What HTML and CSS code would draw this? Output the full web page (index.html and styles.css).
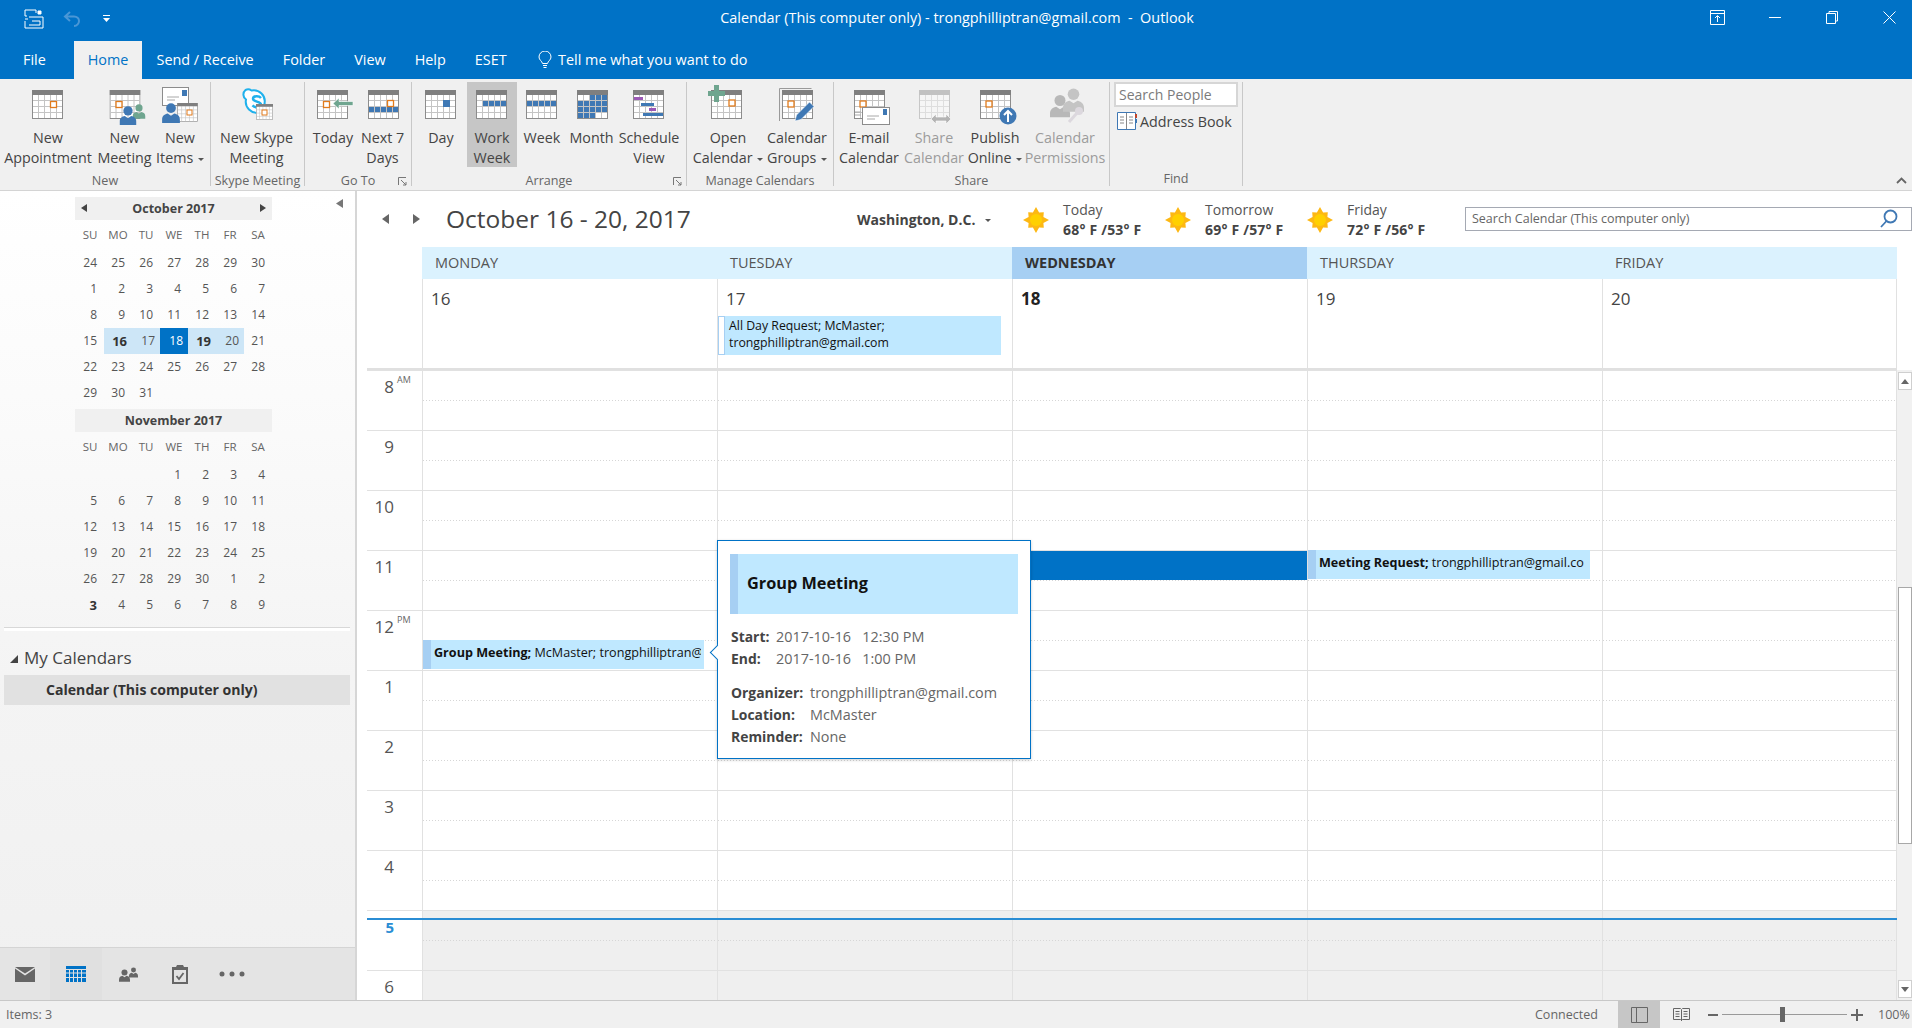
FILE: index.html
```html
<!DOCTYPE html>
<html lang="en">
<head>
<meta charset="utf-8">
<title>Calendar - Outlook</title>
<link rel="stylesheet" href="styles.css">
</head>
<body>
<svg class="defs" aria-hidden="true">
  <defs>
    <symbol id="cal" viewBox="0 0 31 29">
      <rect x=".5" y=".5" width="30" height="28" fill="#fff" stroke="#8c8c8c"/>
      <path d="M6.5 5v23M12.5 5v23M18.5 5v23M24.5 5v23M1 10.5h29M1 16.5h29M1 22.5h29" stroke="#c4c4c4" fill="none"/>
      <rect width="31" height="5" fill="#7f7f7f"/>
    </symbol>
    <symbol id="per" viewBox="0 0 16 18">
      <circle cx="8" cy="4.6" r="4.4"/>
      <path d="M0 18v-3c0-3.500 2.500-5 5-5.500l3 2 3-2c2.500.5 5 2 5 5.500v3z"/>
    </symbol>
    <symbol id="sun" viewBox="0 0 26 26">
      <path fill="#fdb813" d="M13 0l3.100 5.600 4.700-.4-.4 4.700L26 13l-5.600 3.100.4 4.700-4.700-.4L13 26l-3.100-5.600-4.700.4.400-4.700L0 13l5.600-3.100-.4-4.700 4.700.4z"/>
      <circle cx="13" cy="13" r="6" fill="#ffd000"/>
    </symbol>
  </defs>
</svg>

<div class="app">
  <header class="titlebar">
    <div class="qat">
      <svg class="qat-save" width="20" height="20" viewBox="0 0 20 20" fill="none" stroke="#fff"><path d="M1 7V1h11v3M1 7h2M1 10h3M1 12v7h18V8H5M8 12h8v4H5"/><path d="M14 2h3v3h-3z" fill="#fff"/></svg>
      <svg class="qat-undo" width="18" height="16" viewBox="0 0 18 16" fill="none" stroke="#4a97d6" stroke-width="2"><path d="M7 1L2 5.500 7 10M2 5.500h9c3 0 5 2 5 4.500s-2 5-5 5"/></svg>
      <svg class="qat-more" width="7" height="8" viewBox="0 0 7 8"><path fill="#fff" d="M0 0h7v1H0zM0 3h7L3.500 7z"/></svg>
    </div>
    <div class="title">Calendar (This computer only) - trongphilliptran@gmail.com &nbsp;-&nbsp; Outlook</div>
    <div class="winbtns">
      <svg width="15" height="15" viewBox="0 0 15 15" fill="none" stroke="#fff"><path d="M.5.500h14v14H.5zM.5 3.500h14M7.500 12V6M5 8l2.500-2.500L10 8"/></svg>
      <svg width="12" height="15" viewBox="0 0 12 15" fill="none" stroke="#fff"><path d="M0 7.500h12"/></svg>
      <svg width="12" height="15" viewBox="0 0 12 15" fill="none" stroke="#fff"><path d="M.5 3.500h9v10h-9zM3 3V1.500h8.500V11H10"/></svg>
      <svg width="13" height="15" viewBox="0 0 13 15" fill="none" stroke="#fff"><path d="M.5 1.500l12 12M12.500 1.500l-12 12"/></svg>
    </div>
  </header>

  <nav class="tabs">
    <span class="tab t-file">File</span>
    <span class="tab t-home">Home</span>
    <span class="tab">Send / Receive</span>
    <span class="tab">Folder</span>
    <span class="tab">View</span>
    <span class="tab">Help</span>
    <span class="tab">ESET</span>
    <span class="tab t-tell">
      <svg width="14" height="18" viewBox="0 0 14 18" fill="none" stroke="#fff"><path d="M4.500 12.500C4 10 1 9 1 6a6 6 0 0 1 12 0c0 3-3 4-3.500 6.500zM5 14.500h4M5.500 16.500h3"/></svg>
      Tell me what you want to do
    </span>
  </nav>

  <section class="ribbon">
    <div class="grp g-new">
      <div class="btns">
        <div class="rb w-appt"><svg class="ic" viewBox="0 0 44 42"><use href="#cal" x="6" y="6" width="31" height="29"/><rect x="24.500" y="17.500" width="6" height="6" fill="#fff" stroke="#e17b1c" stroke-width="1.300"/></svg><span>New<br>Appointment</span></div>
        <div class="rb w-meet"><svg class="ic" viewBox="0 0 44 42"><use href="#cal" x="6.500" y="6" width="31" height="29"/><rect x="13" y="17.500" width="6" height="6" fill="#fff" stroke="#e17b1c" stroke-width="1.300"/><use href="#per" x="29.500" y="18" width="13" height="19" fill="#6fa58f"/><use href="#per" x="16.500" y="22" width="17" height="19" fill="#3f78b4"/></svg><span>New<br>Meeting</span></div>
        <div class="rb w-items"><svg class="ic" viewBox="0 0 44 42"><rect x="4.500" y="3.500" width="26" height="18" fill="#fff" stroke="#8c8c8c"/><rect x="24" y="6" width="5" height="6" fill="#3f78b4"/><path d="M9 13h12M9 16h8" stroke="#a8a8a8"/><use href="#cal" x="19" y="19" width="21" height="19"/><rect x="29" y="26" width="5" height="5" fill="#fff" stroke="#e17b1c"/><use href="#per" x="4" y="19" width="18" height="20" fill="#3f78b4"/></svg><span>New<br>Items <i class="dd"></i></span></div>
      </div>
      <div class="glabel">New</div>
    </div>
    <div class="grp g-skype">
      <div class="btns">
        <div class="rb w-skype"><svg class="ic" viewBox="0 0 44 42"><path d="M12 7a6 6 0 0 1 6 .5 11 11 0 0 1 13 13 6 6 0 0 1 .5 6 6 6 0 0 1-6 3 11 11 0 0 1-13-13 6 6 0 0 1-.5-9.500z" transform="translate(-1.500 -1)" fill="#fff" stroke="#1fb1ec" stroke-width="2"/><path d="M26 14c-2-2.500-8-2.500-8 .8 0 3.500 8 2.200 8 5.800 0 3.500-6 3.500-8.500.8" fill="none" stroke="#1fb1ec" stroke-width="2.500"/><use href="#cal" x="21" y="20" width="17" height="16"/><rect x="27" y="26" width="5" height="5" fill="#fff" stroke="#e17b1c"/></svg><span>New Skype<br>Meeting</span></div>
      </div>
      <div class="glabel">Skype Meeting</div>
    </div>
    <div class="grp g-goto">
      <div class="btns">
        <div class="rb w-today"><svg class="ic" viewBox="0 0 44 42"><use href="#cal" x="6" y="6" width="31" height="29"/><rect x="12.500" y="17.500" width="6" height="6" fill="#fff" stroke="#e17b1c" stroke-width="1.300"/><path d="M22 19.500l6-5.500v3.500h14v4H28V25z" fill="#6fa58f" stroke="#fff" stroke-width=".6"/></svg><span>Today</span></div>
        <div class="rb w-next"><svg class="ic" viewBox="0 0 44 42"><use href="#cal" x="7" y="6" width="31" height="29"/><path d="M8 23h5v5H8zM14 23h5v5h-5zM20 23h5v5h-5zM26 23h5v5h-5zM32 23h5v5h-5z" fill="#3f78b4"/><rect x="26.500" y="16.500" width="6" height="6" fill="#fff" stroke="#e17b1c" stroke-width="1.300"/></svg><span>Next 7<br>Days</span></div>
      </div>
      <div class="glabel">Go To<svg class="launch" width="9" height="9" viewBox="0 0 9 9" fill="none" stroke="#777"><path d="M.5 8V.5H8M3 3l5 5M8 5v3H5"/></svg></div>
    </div>
    <div class="grp g-arr">
      <div class="btns">
        <div class="rb w-day"><svg class="ic" viewBox="0 0 44 42"><use href="#cal" x="6" y="6" width="31" height="29"/><rect x="24" y="16" width="7" height="7" fill="#3f78b4"/></svg><span>Day</span></div>
        <div class="rb w-ww on"><svg class="ic" viewBox="0 0 44 42"><use href="#cal" x="6" y="6" width="31" height="29"/><path d="M13 17h5v5h-5zM19 17h5v5h-5zM25 17h5v5h-5zM31 17h5v5h-5z" fill="#3f78b4"/></svg><span>Work<br>Week</span></div>
        <div class="rb w-week"><svg class="ic" viewBox="0 0 44 42"><use href="#cal" x="6" y="6" width="31" height="29"/><path d="M7 17h5v5H7zM13 17h5v5h-5zM19 17h5v5h-5zM25 17h5v5h-5zM31 17h5v5h-5z" fill="#3f78b4"/></svg><span>Week</span></div>
        <div class="rb w-month"><svg class="ic" viewBox="0 0 44 42"><use href="#cal" x="7" y="6" width="31" height="29"/><path d="M20 11h5v5h-5zM26 11h5v5h-5zM32 11h5v5h-5zM8 17h5v5H8zM14 17h5v5h-5zM20 17h5v5h-5zM26 17h5v5h-5zM32 17h5v5h-5zM8 23h5v5H8zM14 23h5v5h-5zM20 23h5v5h-5zM26 23h5v5h-5zM32 23h5v5h-5zM8 29h5v5H8zM14 29h5v5h-5zM20 29h5v5h-5z" fill="#3f78b4"/></svg><span>Month</span></div>
        <div class="rb w-sched"><svg class="ic" viewBox="0 0 44 42"><use href="#cal" x="6" y="6" width="31" height="29"/><path d="M7 13h9v3H7z" fill="#9b59b6"/><path d="M14 19h13v3H14z" fill="#3f78b4"/><path d="M22 24h7v3h-7z" fill="#9b59b6"/><path d="M16 29h20v3H16z" fill="#3f78b4"/></svg><span>Schedule<br>View</span></div>
      </div>
      <div class="glabel">Arrange<svg class="launch" width="9" height="9" viewBox="0 0 9 9" fill="none" stroke="#777"><path d="M.5 8V.5H8M3 3l5 5M8 5v3H5"/></svg></div>
    </div>
    <div class="grp g-man">
      <div class="btns">
        <div class="rb w-open"><svg class="ic" viewBox="0 0 44 42"><use href="#cal" x="5" y="6" width="31" height="29"/><rect x="23" y="16" width="6" height="6" fill="#fff" stroke="#e17b1c" stroke-width="1.300"/><path d="M8 1h5v6h6v5h-6v6H8v-6H2V7h6z" fill="#6fa58f"/></svg><span>Open<br>Calendar <i class="dd"></i></span></div>
        <div class="rb w-grp"><svg class="ic" viewBox="0 0 44 42"><path d="M4.500 37V4.500h32" fill="none" stroke="#9a9a9a"/><use href="#cal" x="7" y="6" width="31" height="29"/><rect x="13" y="17" width="6" height="6" fill="#fff" stroke="#e17b1c" stroke-width="1.300"/><path d="M20 37l1.500-6 13-13 4.500 4.500-13 13z" fill="#3f78b4" stroke="#fff" stroke-width=".6"/></svg><span>Calendar<br>Groups <i class="dd"></i></span></div>
      </div>
      <div class="glabel">Manage Calendars</div>
    </div>
    <div class="grp g-share">
      <div class="btns">
        <div class="rb w-mail"><svg class="ic" viewBox="0 0 44 42"><use href="#cal" x="7" y="6" width="31" height="29"/><rect x="13" y="17" width="6" height="6" fill="#fff" stroke="#e17b1c" stroke-width="1.300"/><rect x="15.500" y="23.500" width="27" height="17" fill="#fff" stroke="#8c8c8c"/><rect x="36" y="25" width="4" height="6" fill="#3f78b4"/><path d="M20 32h12M20 35h8M8 28h6M8 31h6" stroke="#a8a8a8"/></svg><span>E-mail<br>Calendar</span></div>
        <div class="rb w-shc off"><svg class="ic" viewBox="0 0 44 42"><g opacity=".4"><use href="#cal" x="7" y="6" width="31" height="29"/></g><path d="M19 35l5-5v3h10v-3l5 5-5 5v-3H24v3z" fill="#b4b4b4" stroke="#fff" stroke-width=".6"/></svg><span>Share<br>Calendar</span></div>
        <div class="rb w-pub"><svg class="ic" viewBox="0 0 44 42"><use href="#cal" x="7" y="6" width="31" height="29"/><rect x="13" y="17" width="6" height="6" fill="#fff" stroke="#e17b1c" stroke-width="1.300"/><circle cx="35" cy="32" r="8.500" fill="#3f78b4"/><path d="M35 38v-11M31 31l4-4 4 4" fill="none" stroke="#fff" stroke-width="2"/></svg><span>Publish<br>Online <i class="dd"></i></span></div>
        <div class="rb w-perm off"><svg class="ic" viewBox="0 0 44 42"><use href="#per" x="7" y="9" width="20" height="26" fill="#b8b8b8"/><use href="#per" x="20" y="3" width="21" height="26" fill="#c4c4c4"/><path d="M26 38l8-9" stroke="#dcd8de" stroke-width="3"/><circle cx="36" cy="27" r="4" fill="#dcd8de"/></svg><span>Calendar<br>Permissions</span></div>
      </div>
      <div class="glabel">Share</div>
    </div>
    <div class="grp g-find">
      <div class="findbox">Search People</div>
      <div class="addr">
        <svg width="20" height="18" viewBox="0 0 20 18"><path d="M.5.500h18v17H.5z" fill="#fff" stroke="#3f78b4"/><path d="M9.500 1v16M3 5h4M3 8h4M3 11h4M12 5h4M12 8h4M12 11h4" stroke="#888"/><path d="M18 2h2v4h-2z" fill="#c0452a"/><path d="M18 7h2v4h-2z" fill="#3f78b4"/></svg>
        Address Book
      </div>
      <div class="glabel find-label">Find</div>
    </div>
    <svg class="collapse" width="11" height="7" viewBox="0 0 11 7" fill="none" stroke="#666" stroke-width="1.800"><path d="M1 6l4.500-4.500L10 6"/></svg>
  </section>

  <div class="body">
    <aside class="side">
      <div class="side-top">
        <svg class="side-col" width="8" height="9" viewBox="0 0 8 9"><path d="M7 0v9L0 4.500z" fill="#777"/></svg>
        <div class="mini">
          <div class="mhd"><i class="ml"></i><b>October 2017</b><i class="mr"></i></div>
          <div class="mc dow"><span>SU</span><span>MO</span><span>TU</span><span>WE</span><span>TH</span><span>FR</span><span>SA</span></div>
          <div class="mc">
            <span>24</span><span>25</span><span>26</span><span>27</span><span>28</span><span>29</span><span>30</span>
            <span>1</span><span>2</span><span>3</span><span>4</span><span>5</span><span>6</span><span>7</span>
            <span>8</span><span>9</span><span>10</span><span>11</span><span>12</span><span>13</span><span>14</span>
            <span>15</span><span class="sel bd">16</span><span class="sel">17</span><span class="cur">18</span><span class="sel bd">19</span><span class="sel">20</span><span>21</span>
            <span>22</span><span>23</span><span>24</span><span>25</span><span>26</span><span>27</span><span>28</span>
            <span>29</span><span>30</span><span>31</span><span></span><span></span><span></span><span></span>
          </div>
          <div class="mhd nov"><b>November 2017</b></div>
          <div class="mc dow"><span>SU</span><span>MO</span><span>TU</span><span>WE</span><span>TH</span><span>FR</span><span>SA</span></div>
          <div class="mc">
            <span></span><span></span><span></span><span>1</span><span>2</span><span>3</span><span>4</span>
            <span>5</span><span>6</span><span>7</span><span>8</span><span>9</span><span>10</span><span>11</span>
            <span>12</span><span>13</span><span>14</span><span>15</span><span>16</span><span>17</span><span>18</span>
            <span>19</span><span>20</span><span>21</span><span>22</span><span>23</span><span>24</span><span>25</span>
            <span>26</span><span>27</span><span>28</span><span>29</span><span>30</span><span>1</span><span>2</span>
            <span class="bd plain">3</span><span>4</span><span>5</span><span>6</span><span>7</span><span>8</span><span>9</span>
          </div>
        </div>
        <div class="side-rule"></div>
        <div class="mycal"><i class="tri"></i>My Calendars</div>
        <div class="calrow">Calendar (This computer only)</div>
      </div>
      <div class="navbar">
        <div class="nv nv-1"><svg width="20" height="15" viewBox="0 0 20 15"><path d="M0 1.500l10 7 10-7V15H0z" fill="#666"/><path d="M0 0h20l-10 6.500z" fill="#666"/></svg></div>
        <div class="nv nv-on"><svg width="20" height="16" viewBox="0 0 20 16" fill="#0072c6"><path d="M0 0h20v3H0zM0 4h3v2.500H0zM4 4h3v2.500H4zM8 4h3v2.500H8zM12 4h3v2.500h-3zM16 4h4v2.500h-4zM0 7.500h3v3.500H0zM4 7.500h3v3.500H4zM8 7.500h3v3.500H8zM12 7.500h3v3.500h-3zM16 7.500h4v3.500h-4zM0 12h3v4H0zM4 12h3v4H4zM8 12h3v4H8zM12 12h3v4h-3zM16 12h4v4h-4z"/></svg></div>
        <div class="nv"><svg width="19" height="16" viewBox="0 0 19 16"><use href="#per" x="0" y="3" width="11" height="13" fill="#666"/><use href="#per" x="10" y="0" width="9" height="13" fill="#666"/></svg></div>
        <div class="nv"><svg width="16" height="19" viewBox="0 0 16 19"><path d="M0 2h4l1-2h6l1 2h4v17H0z" fill="#666"/><path d="M2 5h12v12H2z" fill="#e3e3e3"/><path d="M4.500 11l2.500 3 4.500-6" stroke="#666" stroke-width="1.800" fill="none"/></svg></div>
        <div class="nv"><svg width="26" height="6" viewBox="0 0 26 6" fill="#666"><circle cx="3" cy="3" r="2.500"/><circle cx="13" cy="3" r="2.500"/><circle cx="23" cy="3" r="2.500"/></svg></div>
      </div>
    </aside>

    <main class="main">
      <div class="mhead">
        <div class="arrows"><i class="al"></i><i class="ar"></i></div>
        <h1 class="range">October 16 - 20, 2017</h1>
        <div class="loc">Washington, D.C. <i class="dd"></i></div>
        <div class="wx"><svg width="26" height="26"><use href="#sun" width="26" height="26"/></svg><div><div>Today</div><b>68° F /53° F</b></div></div>
        <div class="wx"><svg width="26" height="26"><use href="#sun" width="26" height="26"/></svg><div><div>Tomorrow</div><b>69° F /57° F</b></div></div>
        <div class="wx wx-last"><svg width="26" height="26"><use href="#sun" width="26" height="26"/></svg><div><div>Friday</div><b>72° F /56° F</b></div></div>
        <div class="search"><span>Search Calendar (This computer only)</span><svg width="18" height="20" viewBox="0 0 18 20" fill="none" stroke="#3f78b4" stroke-width="1.800"><circle cx="10.500" cy="7.500" r="6"/><path d="M6.500 12L1 18"/></svg></div>
      </div>

      <div class="dayhdr">
        <div>MONDAY</div><div>TUESDAY</div><div class="today">WEDNESDAY</div><div>THURSDAY</div><div>FRIDAY</div>
      </div>

      <div class="allday">
        <div class="gut"></div>
        <div class="ad">16</div>
        <div class="ad">17
          <div class="adev"><i></i><span>All Day Request; McMaster;<br>trongphilliptran@gmail.com</span></div>
        </div>
        <div class="ad bd">18</div>
        <div class="ad">19</div>
        <div class="ad">20</div>
      </div>

      <div class="timewrap">
        <div class="times">
          <div class="gut hr"><span class="hn">8</span><span class="ap">AM</span></div><div class="c"></div><div class="c"></div><div class="c"></div><div class="c"></div><div class="c"></div>
          <div class="gut hr"><span class="hn">9</span></div><div class="c"></div><div class="c"></div><div class="c"></div><div class="c"></div><div class="c"></div>
          <div class="gut hr"><span class="hn">10</span></div><div class="c"></div><div class="c"></div><div class="c"></div><div class="c"></div><div class="c"></div>
          <div class="gut hr"><span class="hn">11</span></div><div class="c"></div><div class="c"></div><div class="c"><div class="busy"></div></div><div class="c"><div class="ev ev-req"><span><b>Meeting Request;</b> trongphilliptran@gmail.com</span></div></div><div class="c"></div>
          <div class="gut hr"><span class="hn">12</span><span class="ap">PM</span></div><div class="c"><div class="ev ev-grp"><span><b>Group Meeting;</b> McMaster; trongphilliptran@</span></div></div><div class="c"></div><div class="c"></div><div class="c"></div><div class="c"></div>
          <div class="gut hr"><span class="hn">1</span></div><div class="c"></div><div class="c"></div><div class="c"></div><div class="c"></div><div class="c"></div>
          <div class="gut hr"><span class="hn">2</span></div><div class="c"></div><div class="c"></div><div class="c"></div><div class="c"></div><div class="c"></div>
          <div class="gut hr"><span class="hn">3</span></div><div class="c"></div><div class="c"></div><div class="c"></div><div class="c"></div><div class="c"></div>
          <div class="gut hr"><span class="hn">4</span></div><div class="c"></div><div class="c"></div><div class="c"></div><div class="c"></div><div class="c"></div>
          <div class="gut hr"><span class="hn now">5</span></div><div class="c off"></div><div class="c off"></div><div class="c off"></div><div class="c off"></div><div class="c off"></div>
          <div class="gut hr"><span class="hn">6</span></div><div class="c off"></div><div class="c off"></div><div class="c off"></div><div class="c off"></div><div class="c off"></div>
        </div>
        <div class="sb">
          <div class="sbb"><i class="up"></i></div>
          <div class="thumb"></div>
          <div class="sbb sbb-dn"><i class="dn"></i></div>
        </div>
        <div class="nowline"></div>
        <div class="pop">
          <i class="pop-arrow"></i>
          <div class="pop-head">Group Meeting</div>
          <dl class="info i-time">
            <dt>Start:</dt><dd>2017-10-16 &nbsp; 12:30 PM</dd>
            <dt>End:</dt><dd>2017-10-16 &nbsp; 1:00 PM</dd>
          </dl>
          <dl class="info i-more">
            <dt>Organizer:</dt><dd>trongphilliptran@gmail.com</dd>
            <dt>Location:</dt><dd>McMaster</dd>
            <dt>Reminder:</dt><dd>None</dd>
          </dl>
        </div>
      </div>
    </main>
  </div>

  <footer class="status">
    <span class="items">Items: 3</span>
    <span class="conn">Connected</span>
    <span class="vw vw-on"><svg width="17" height="16" viewBox="0 0 17 16" fill="none" stroke="#666"><path d="M.5.500h16v15H.5zM5.500 1v14"/></svg></span>
    <span class="vw"><svg width="17" height="15" viewBox="0 0 17 15" fill="none" stroke="#666"><path d="M.5 1.500h7l1 1 1-1h7v11h-7l-1 1-1-1h-7zM8.500 3v11M2.500 4.500h4M2.500 7h4M2.500 9.500h4M10.500 4.500h4M10.500 7h4M10.500 9.500h4"/></svg></span>
    <div class="zoom">
      <i class="z-minus"></i>
      <div class="z-track"><i></i></div>
      <i class="z-plus"></i>
    </div>
    <span class="pct">100%</span>
  </footer>
</div>
</body>
</html>
```
FILE: styles.css
```css
* { box-sizing: border-box; }
html, body { margin: 0; height: 100%; overflow: hidden; }
body { font-family: "Open Sans", "Liberation Sans", sans-serif; font-size: 13px; color: #444; background: #fff; }
i { font-style: normal; }
.defs { position: absolute; width: 0; height: 0; }
.app { display: flex; flex-direction: column; height: 1028px; width: 1912px; }

/* title bar */
.titlebar { height: 41px; background: #0072c6; color: #fff; display: flex; align-items: center; position: relative; flex: none; }
.qat { display: flex; align-items: center; padding-left: 24px; margin-top: -4px; }
.qat-undo { margin-left: 19px; }
.qat-more { margin-left: 22px; }
.title { position: absolute; left: 0; right: 0; top: 7px; text-align: center; font-size: 14.400px; line-height: 22px; padding-left: 2px; }
.winbtns { margin-left: auto; display: flex; align-items: center; margin-top: -7px; padding-right: 16px; }
.winbtns svg:nth-child(2) { margin-left: 44px; }
.winbtns svg:nth-child(3) { margin-left: 45px; }
.winbtns svg:nth-child(4) { margin-left: 45px; }

.tabs { height: 38px; background: #0072c6; color: #fff; display: flex; flex: none; font-size: 14.400px; line-height: 38px; padding-left: 9px; }
.tab { padding: 0 14.500px; }
.t-file { padding: 0 14px; width: 65px; }
.t-home { background: #f0f0f0; color: #0072c6; width: 68px; padding: 0; text-align: center; }
.t-tell { display: flex; align-items: center; gap: 6px; padding-left: 17px; }

/* ribbon */
.ribbon { height: 112px; background: #f0f0f0; border-bottom: 1px solid #d4d4d4; display: flex; padding-top: 3px; position: relative; flex: none; }
.grp { height: 104px; border-right: 1px solid #c8c8c8; display: flex; flex-direction: column; position: relative; flex: none; }
.g-new { width: 211px; }
.g-skype { width: 94px; }
.g-goto { width: 107px; }
.g-arr { width: 275px; }
.g-man { width: 147px; }
.g-share { width: 276px; }
.g-find { width: 133px; padding: 0 4px; }
.btns { display: flex; height: 86px; flex: none; }
.rb { display: flex; flex-direction: column; align-items: center; text-align: center; font-size: 14.300px; line-height: 20px; height: 85px; flex: none; white-space: nowrap; color: #444; }
.rb .ic { width: 44px; height: 42px; margin: 2px 0 2px; flex: none; overflow: visible; }
.rb.on { background: #c6c6c6; }
.rb.off { color: #9c9c9c; }
.w-appt { width: 96px; }
.w-meet { width: 57px; }
.w-items { width: 54px; }
.w-skype { width: 91px; }
.w-today { width: 56px; }
.w-next { width: 43px; }
.w-day { width: 52px; margin-left: 3px; }
.w-ww { width: 50px; }
.w-week { width: 50px; }
.w-month { width: 49px; }
.w-sched { width: 66px; }
.w-open { width: 78px; margin-left: 2px; }
.w-grp { width: 60px; }
.w-mail { width: 68px; margin-left: 1px; }
.w-shc { width: 62px; }
.w-pub { width: 60px; }
.w-perm { width: 80px; }
.dd { display: inline-block; width: 0; height: 0; border: 3px solid transparent; border-top: 3px solid #555; border-bottom: 0; vertical-align: middle; margin-left: 1px; }
.glabel { height: 18px; line-height: 26px; text-align: center; font-size: 12.600px; color: #666; white-space: nowrap; position: relative; }
.launch { position: absolute; right: 4px; top: 9px; }
.findbox { height: 25px; width: 124px; background: #fff; border: 2px solid #d6d6d6; padding-left: 3px; line-height: 22px; font-size: 14px; color: #7b7b7b; white-space: nowrap; overflow: hidden; }
.addr { display: flex; align-items: center; gap: 3px; margin: 4px 0 0 3px; height: 20px; font-size: 14.300px; white-space: nowrap; }
.find-label { margin-top: 35px; }
.collapse { position: absolute; right: 5px; top: 98px; }

/* main split */
.body { display: flex; height: 809px; flex: none; }
.side { width: 357px; border-right: 2px solid #d6d6d6; display: flex; flex-direction: column; flex: none; background: linear-gradient(#fff, #fbfbfb 25%, #f4f4f4 60%, #f0f0f0); }
.side-top { flex: 1; padding-top: 6px; position: relative; }
.side-col { position: absolute; left: 336px; top: 8px; }
.mini { width: 197px; margin-left: 75px; }
.mhd { height: 23px; background: #f0f0f0; display: flex; align-items: center; justify-content: center; position: relative; font-size: 12.500px; color: #444; }
.mhd.nov { margin-top: 3px; }
.ml, .mr { position: absolute; top: 7px; width: 0; height: 0; border: 4.500px solid transparent; }
.ml { left: 6px; border-left: 0; border-right: 6px solid #444; }
.mr { right: 6px; border-right: 0; border-left: 6px solid #444; }
.mc { display: grid; grid-template-columns: repeat(7, 28px); font-size: 12px; color: #555; margin-left: 1px; }
.mc span { height: 26px; line-height: 26px; text-align: right; padding-right: 7px; }
.mc.dow { height: 28px; margin-top: 2px; }
.mc.dow span { height: 26px; text-align: center; padding: 0; font-size: 11.500px; color: #666; }
.sel { background: #cde6f7; padding-right: 5px !important; }
.cur { background: #0072c6; color: #fff; padding-right: 5px !important; }
.mc .bd { font-weight: 700; color: #333; font-size: 13px; }
.side-rule { margin: 9px 5px 0 4px; height: 4px; border-top: 1px solid #d8d8d8; background: #fff; }
.mycal { margin-top: 13px; padding-left: 24px; height: 29px; line-height: 28px; font-size: 17px; color: #444; position: relative; }
.tri { position: absolute; left: 10px; top: 11px; width: 0; height: 0; border-style: solid; border-width: 0 0 8px 8px; border-color: transparent transparent #444 transparent; }
.calrow { margin: 2px 5px 0 4px; height: 30px; line-height: 30px; background: #e1e1e1; padding-left: 42px; font-weight: 700; font-size: 14.100px; color: #333; white-space: nowrap; }
.navbar { height: 53px; background: #e4e4e4; border-top: 1px solid #d4d4d4; display: flex; flex: none; }
.nv { width: 52px; display: flex; align-items: center; justify-content: center; }
.nv-1 { width: 50px; }
.nv-on { background: #e0e0e0; }

.main { width: 1555px; display: flex; flex-direction: column; flex: none; position: relative; }
.mhead { height: 56px; display: flex; align-items: center; flex: none; }
.arrows { display: flex; gap: 24px; margin-left: 25px; width: 64px; }
.al, .ar { width: 0; height: 0; border: 5.500px solid transparent; }
.al { border-left: 0; border-right: 7px solid #666; }
.ar { border-right: 0; border-left: 7px solid #666; }
.range { margin: -1px 0 0; font-weight: 400; font-size: 24.500px; color: #444; width: 411px; white-space: nowrap; }
.loc { font-weight: 700; font-size: 14px; width: 166px; white-space: nowrap; color: #444; }
.loc .dd { margin-left: 6px; }
.wx { display: flex; align-items: center; width: 142px; gap: 14px; font-size: 14px; line-height: 20px; white-space: nowrap; color: #555; padding-top: 1px; }
.wx b { color: #444; letter-spacing: .2px; }
.wx-last { width: 159px; }
.search { width: 447px; height: 24px; margin: -1px 0 0 -1px; border: 1px solid #a5a9b3; display: flex; align-items: center; justify-content: space-between; padding: 0 13px 0 6px; font-size: 12.500px; color: #666; }

.dayhdr { display: grid; grid-template-columns: repeat(5, 295px); margin-left: 65px; width: 1475px; height: 32px; background: #dbf2fe; font-size: 14.500px; line-height: 32px; color: #555; flex: none; }
.dayhdr div { padding-left: 13px; }
.today { background: #a6cff3; font-weight: 700; color: #333; }

.allday { display: grid; grid-template-columns: 55px repeat(5, 295px); margin-left: 10px; width: 1530px; height: 91px; border-bottom: 2px solid #e0e0e0; flex: none; }
.gut { background: #fff; }
.ad { border-left: 1px solid #e1e1e1; font-size: 17px; line-height: 24px; padding: 8px 0 0 8px; color: #444; }
.ad:last-child { border-right: 1px solid #e1e1e1; }
.ad.bd { font-weight: 700; color: #222; }
.adev { display: flex; width: 283px; height: 39px; margin: 5px 0 0 -8px; background: #bfe8ff; font-size: 12.300px; line-height: 17px; color: #111; }
.adev i { width: 7px; margin-right: 4px; background: #fff; border: 1px solid #a6cff3; flex: none; }
.adev span { padding-top: 1px; }

.timewrap { display: flex; padding-left: 10px; height: 630px; position: relative; flex: none; }
.times { display: grid; grid-template-columns: 55px repeat(5, 295px); grid-auto-rows: 60px; width: 1530px; height: 630px; overflow: hidden; flex: none; }
.hr { border-top: 1px solid #e1e1e1; display: flex; align-items: flex-start; }
.hn { width: 27px; text-align: right; font-size: 17px; line-height: 32px; color: #555; }
.hn.now { color: #2a8dd4; font-weight: 700; font-size: 15px; }
.ap { font-size: 9px; line-height: 18px; margin-left: 3px; color: #666; }
.c { border-top: 1px solid #e1e1e1; border-left: 1px solid #e1e1e1; background-image: repeating-linear-gradient(90deg, #d6d6d6 0 1px, transparent 1px 3px); background-size: 100% 1px; background-position: 0 29px; background-repeat: no-repeat; }
.c:nth-child(6n) { border-right: 1px solid #e1e1e1; }
.c.off { background-color: #efefef; }
.busy { height: 29px; background: #0072c6; }
.ev { height: 29px; background: #bfe8ff; border-left: 8px solid #a6cff3; font-size: 12.600px; line-height: 25px; color: #111; white-space: nowrap; padding-left: 3px; }
.ev span { display: block; overflow: hidden; }
.ev-grp { width: 281px; margin-top: 29px; }
.ev-grp span { width: 267px; }
.ev-req { width: 282px; margin-top: -1px; }
.ev-req span { width: 265px; }
.sb { width: 15px; background: #f1f1f1; display: flex; flex-direction: column; padding-left: 1px; position: relative; flex: none; }
.sbb { height: 18px; margin-top: 2px; background: #fff; border: 1px solid #cfcfcf; display: flex; align-items: center; justify-content: center; flex: none; }
.sbb-dn { margin-top: auto; margin-bottom: 2px; }
.up, .dn { width: 0; height: 0; border: 4px solid transparent; }
.up { border-top: 0; border-bottom: 5px solid #666; }
.dn { border-bottom: 0; border-top: 5px solid #666; }
.thumb { height: 257px; margin-top: 197px; background: #fff; border: 1px solid #a8a8a8; flex: none; }
.nowline { position: absolute; left: 10px; top: 548px; width: 1530px; height: 2px; background: #2a8dd4; }

/* popup */
.pop { position: absolute; left: 360px; top: 170px; width: 314px; height: 219px; background: #fff; border: 1px solid #0072c6; padding: 13px 12px 0; box-shadow: 0 1px 3px rgba(0,0,0,.2); }
.pop-arrow { position: absolute; left: -6px; top: 106px; width: 11px; height: 11px; background: #fff; border-left: 1px solid #0072c6; border-bottom: 1px solid #0072c6; transform: rotate(45deg); }
.pop-head { height: 60px; background: #bfe8ff; border-left: 8px solid #a6cff3; padding-left: 9px; font-weight: 700; font-size: 16.300px; line-height: 58px; color: #111; }
.info { display: grid; margin: 0; padding-left: 1px; font-size: 14.400px; line-height: 22px; }
.info dt { font-weight: 700; color: #444; font-size: 13.900px; }
.info dd { margin: 0; color: #666; white-space: nowrap; }
.i-time { grid-template-columns: 45px 1fr; margin-top: 12px; }
.i-more { grid-template-columns: 79px 1fr; margin-top: 12px; }

/* status */
.status { height: 28px; background: #f0f0f0; border-top: 1px solid #c8c8c8; display: flex; align-items: stretch; flex: none; font-size: 12.500px; line-height: 27px; color: #666; }
.items { padding-left: 6px; width: 1535px; }
.conn { width: 83px; }
.vw { width: 42px; display: flex; align-items: center; justify-content: center; flex: none; }
.vw-on { background: #c6c6c6; }
.zoom { display: flex; align-items: center; width: 160px; margin-left: 4px; }
.z-minus { width: 10px; height: 2px; background: #666; margin-left: 2px; }
.z-track { width: 125px; height: 1px; background: #999; margin: 0 4px; position: relative; }
.z-track i { position: absolute; left: 58px; top: -7px; width: 5px; height: 15px; background: #666; }
.z-plus { width: 12px; height: 12px; background: linear-gradient(#666, #666) center / 100% 2px no-repeat, linear-gradient(#666, #666) center / 2px 100% no-repeat; }
.pct { margin-left: 12px; white-space: nowrap; }
```
